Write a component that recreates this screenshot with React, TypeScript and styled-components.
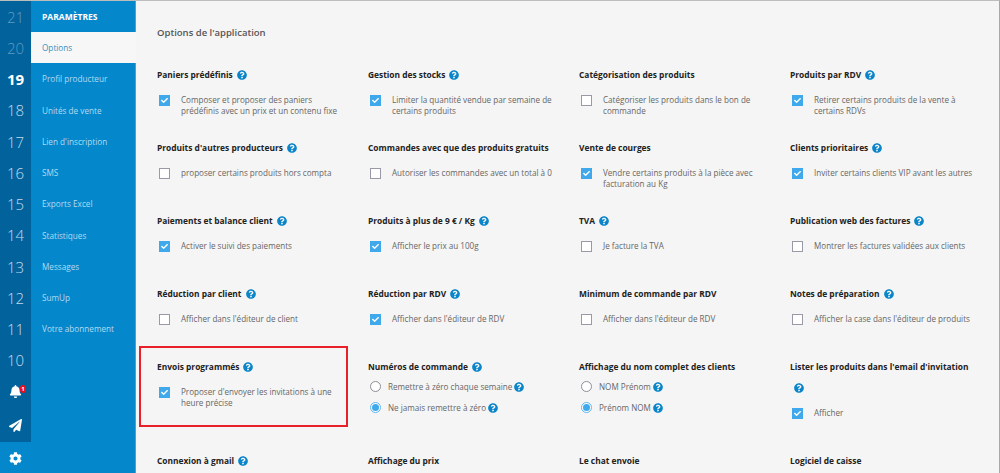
import { createGlobalStyle } from "styled-components";
import styled from "styled-components";
import { FaBell, FaCheck, FaCog, FaPaperPlane, FaQuestionCircle } from "react-icons/fa";

const GlobalStyle = createGlobalStyle`
    html, body {
        margin: 0;
        padding: 0;
        height: 100%;
        overflow: hidden;
    }
    body {
        font-family: "Open Sans", "Liberation Sans", sans-serif;
    }
`;

const Page = styled.div`
    display: flex;
    height: 473px;
    overflow: hidden;
    background-color: #f5f5f5;
    border-top: 1px solid #bdbdbd;
    border-right: 1px solid #a8a8a8;
    box-sizing: border-box;
`;

const Nav = styled.nav`
    display: grid;
    grid-template-columns: 31px 105px;
    grid-template-rows: 441px 31px;
    width: 136px;
    flex: none;
    background-color: #0587cb;
`;

const Rail = styled.div`
    background-color: #02629c;
    display: flex;
    flex-direction: column;
`;

const RailItem = styled.div<{ $tone?: "dim" | "on" }>`
    height: 31.25px;
    flex: none;
    display: flex;
    align-items: center;
    justify-content: center;
    font-size: 15px;
    font-weight: ${(p) => (p.$tone === "on" ? 700 : 300)};
    color: ${(p) => (p.$tone === "dim" ? "#5e9cc3" : p.$tone === "on" ? "#ffffff" : "#c3dcec")};
`;

const BellWrap = styled.div`
    position: relative;
    height: 31.25px;
    flex: none;
    display: flex;
    align-items: center;
    justify-content: center;
    color: #fff;
    font-size: 13px;
`;

const Badge = styled.span`
    position: absolute;
    top: 9px;
    left: 20px;
    width: 6px;
    height: 8px;
    border-radius: 3px;
    background-color: #e8101f;
    color: #fff;
    font-size: 6px;
    font-weight: 700;
    line-height: 8px;
    text-align: center;
`;

const PlaneWrap = styled.div`
    flex: 1;
    display: flex;
    align-items: center;
    justify-content: center;
    color: #fff;
    font-size: 13px;
    padding-top: 2px;
`;

const Menu = styled.div`
    grid-row: span 2;
    display: flex;
    flex-direction: column;
    border-right: 1px solid #3ea6dc;
`;

const MenuHeader = styled.div`
    height: 31px;
    flex: none;
    padding-left: 11px;
    display: flex;
    align-items: center;
    color: #fff;
    font-size: 8.5px;
    font-weight: 700;
`;

const MenuItem = styled.div<{ $active?: boolean }>`
    height: 31.25px;
    flex: none;
    padding-left: 11px;
    display: flex;
    align-items: center;
    font-size: 8.2px;
    color: ${(p) => (p.$active ? "#3a8fc0" : "#b2daf1")};
    background-color: ${(p) => (p.$active ? "#f7f7f7" : "transparent")};
    margin-right: ${(p) => (p.$active ? "-1px" : "0")};
`;

const GearCell = styled.div`
    display: flex;
    align-items: center;
    justify-content: center;
    color: #fff;
    font-size: 13px;
    padding-top: 1px;
`;

const Main = styled.main`
    flex: 1;
    min-width: 0;
    padding: 25px 0 0 21px;
`;

const PageTitle = styled.h2`
    margin: 0 0 24px;
    font-size: 9.5px;
    line-height: 14px;
    font-weight: 600;
    color: #555;
`;

const Grid = styled.div`
    display: grid;
    grid-template-columns: repeat(4, 211px);
    grid-template-rows: repeat(4, 73px) 94px 40px;
`;

const Cell = styled.section<{ $marked?: boolean }>`
    position: relative;
    padding-right: 22px;
    ${(p) =>
        p.$marked &&
        `&::after {
            content: "";
            position: absolute;
            left: -18px;
            top: -10px;
            width: 209px;
            height: 81px;
            border: 2px solid #e8202a;
            box-sizing: border-box;
        }`}
`;

const CellTitle = styled.h3`
    margin: 0;
    font-size: 8.4px;
    line-height: 21px;
    font-weight: 700;
    color: #222;
`;

const Help = styled(FaQuestionCircle)`
    color: #0a85c9;
    font-size: 10px;
    vertical-align: -1.5px;
    margin-left: 5px;
`;

const TitleHelp = styled(Help)`
    margin-left: 4px;
`;

const CheckRow = styled.label`
    display: flex;
    align-items: flex-start;
    margin-top: 10px;
    padding-left: 2px;
`;

const Box = styled.span<{ $on?: boolean }>`
    flex: none;
    width: 11px;
    height: 11px;
    box-sizing: border-box;
    display: flex;
    align-items: center;
    justify-content: center;
    background-color: ${(p) => (p.$on ? "#3fa9ec" : "#ffffff")};
    border: ${(p) => (p.$on ? "none" : "1px solid #9a9aa6")};
    color: #fff;
    font-size: 7px;
`;

const OptionText = styled.span`
    margin-left: 11px;
    font-size: 8.1px;
    line-height: 10.7px;
    color: #666;
`;

const Radios = styled.div`
    display: flex;
    flex-direction: column;
    margin-top: -1px;
`;

const RadioRow = styled.label`
    display: flex;
    align-items: center;
    height: 21px;
    padding-left: 2px;
`;

const Radio = styled.span<{ $on?: boolean }>`
    flex: none;
    position: relative;
    width: 11px;
    height: 11px;
    box-sizing: border-box;
    border-radius: 50%;
    background-color: #fff;
    border: 1px solid ${(p) => (p.$on ? "#5db6ee" : "#8e8e96")};
    ${(p) =>
        p.$on &&
        `&::after {
            content: "";
            position: absolute;
            inset: 1px;
            border-radius: 50%;
            background-color: #3fa9ec;
        }`}
`;

const RadioText = styled.span`
    margin-left: 7px;
    font-size: 8.1px;
    color: #666;
`;

const RadioHelp = styled(Help)`
    margin-left: 2px;
`;

type Option = {
    title: string;
    help?: boolean;
    text?: string;
    on?: boolean;
    radios?: { label: string; on?: boolean }[];
    marked?: boolean;
};

const railNumbers = [21, 20, 19, 18, 17, 16, 15, 14, 13, 12, 11, 10];

const menu = [
    "Options",
    "Profil producteur",
    "Unités de vente",
    "Lien d'inscription",
    "SMS",
    "Exports Excel",
    "Statistiques",
    "Messages",
    "SumUp",
    "Votre abonnement",
];

const options: Option[] = [
    { title: "Paniers prédéfinis", help: true, on: true, text: "Composer et proposer des paniers prédéfinis avec un prix et un contenu fixe" },
    { title: "Gestion des stocks", help: true, on: true, text: "Limiter la quantité vendue par semaine de certains produits" },
    { title: "Catégorisation des produits", text: "Catégoriser les produits dans le bon de commande" },
    { title: "Produits par RDV", help: true, on: true, text: "Retirer certains produits de la vente à certains RDVs" },
    { title: "Produits d'autres producteurs", help: true, text: "proposer certains produits hors compta" },
    { title: "Commandes avec que des produits gratuits", text: "Autoriser les commandes avec un total à 0" },
    { title: "Vente de courges", on: true, text: "Vendre certains produits à la pièce avec facturation au Kg" },
    { title: "Clients prioritaires", help: true, on: true, text: "Inviter certains clients VIP avant les autres" },
    { title: "Paiements et balance client", help: true, on: true, text: "Activer le suivi des paiements" },
    { title: "Produits à plus de 9 € / Kg", help: true, on: true, text: "Afficher le prix au 100g" },
    { title: "TVA", help: true, text: "Je facture la TVA" },
    { title: "Publication web des factures", help: true, text: "Montrer les factures validées aux clients" },
    { title: "Réduction par client", help: true, text: "Afficher dans l'éditeur de client" },
    { title: "Réduction par RDV", help: true, on: true, text: "Afficher dans l'éditeur de RDV" },
    { title: "Minimum de commande par RDV", text: "Afficher dans l'éditeur de RDV" },
    { title: "Notes de préparation", help: true, text: "Afficher la case dans l'éditeur de produits" },
    { title: "Envois programmés", help: true, on: true, marked: true, text: "Proposer d'envoyer les invitations à une heure précise" },
    {
        title: "Numéros de commande",
        help: true,
        radios: [{ label: "Remettre à zéro chaque semaine" }, { label: "Ne jamais remettre à zéro", on: true }],
    },
    {
        title: "Affichage du nom complet des clients",
        radios: [{ label: "NOM Prénom" }, { label: "Prénom NOM", on: true }],
    },
    { title: "Lister les produits dans l'email d'invitation", help: true, on: true, text: "Afficher" },
    { title: "Connexion à gmail", help: true },
    { title: "Affichage du prix" },
    { title: "Le chat envoie" },
    { title: "Logiciel de caisse" },
];

function railTone(n: number) {
    if (n >= 20) return "dim";
    if (n === 19) return "on";
    return undefined;
}

export default function App() {
    return (
        <Page>
            <GlobalStyle />
            <Nav>
                <Rail>
                    {railNumbers.map((n) => (
                        <RailItem key={n} $tone={railTone(n)}>
                            {n}
                        </RailItem>
                    ))}
                    <BellWrap>
                        <FaBell />
                        <Badge>1</Badge>
                    </BellWrap>
                    <PlaneWrap>
                        <FaPaperPlane />
                    </PlaneWrap>
                </Rail>
                <Menu>
                    <MenuHeader>PARAMÈTRES</MenuHeader>
                    {menu.map((label, i) => (
                        <MenuItem key={label} $active={i === 0}>
                            {label}
                        </MenuItem>
                    ))}
                </Menu>
                <GearCell>
                    <FaCog />
                </GearCell>
            </Nav>
            <Main>
                <PageTitle>Options de l'application</PageTitle>
                <Grid>
                    {options.map((o) => (
                        <Cell key={o.title} $marked={o.marked}>
                            <CellTitle>
                                {o.title}
                                {o.help && <TitleHelp />}
                            </CellTitle>
                            {o.text && (
                                <CheckRow>
                                    <Box $on={o.on}>{o.on && <FaCheck />}</Box>
                                    <OptionText>{o.text}</OptionText>
                                </CheckRow>
                            )}
                            {o.radios && (
                                <Radios>
                                    {o.radios.map((r) => (
                                        <RadioRow key={r.label}>
                                            <Radio $on={r.on} />
                                            <RadioText>{r.label}</RadioText>
                                            <RadioHelp />
                                        </RadioRow>
                                    ))}
                                </Radios>
                            )}
                        </Cell>
                    ))}
                </Grid>
            </Main>
        </Page>
    );
}
